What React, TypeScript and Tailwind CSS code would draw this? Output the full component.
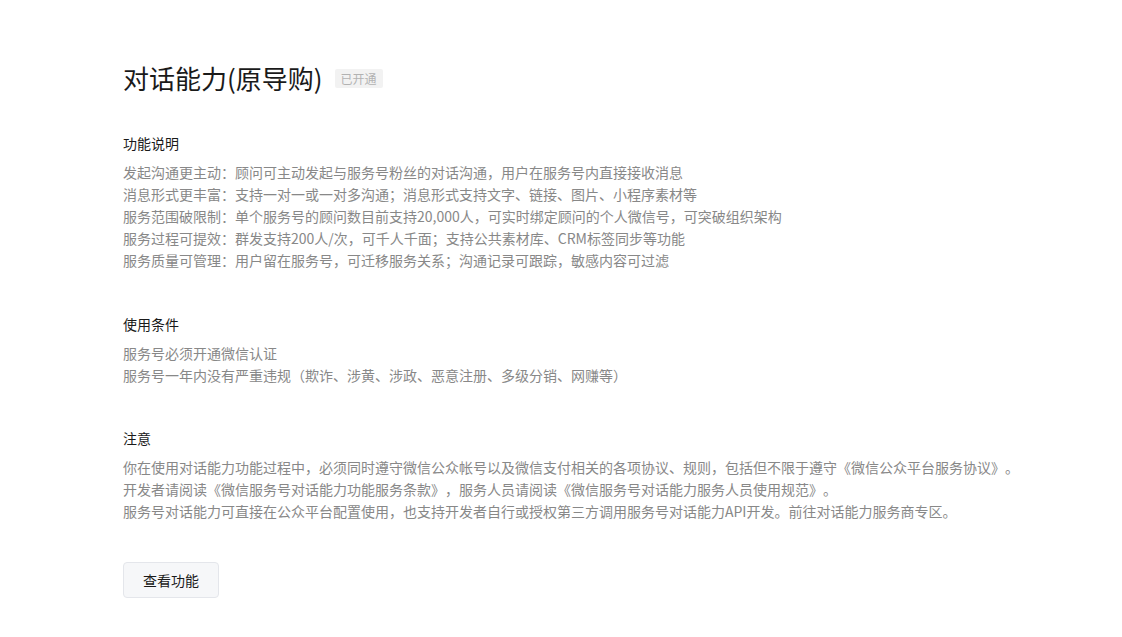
const features = [
  '发起沟通更主动：顾问可主动发起与服务号粉丝的对话沟通，用户在服务号内直接接收消息',
  '消息形式更丰富：支持一对一或一对多沟通；消息形式支持文字、链接、图片、小程序素材等',
  '服务范围破限制：单个服务号的顾问数目前支持20,000人，可实时绑定顾问的个人微信号，可突破组织架构',
  '服务过程可提效：群发支持200人/次，可千人千面；支持公共素材库、CRM标签同步等功能',
  '服务质量可管理：用户留在服务号，可迁移服务关系；沟通记录可跟踪，敏感内容可过滤',
];

const conditions = [
  '服务号必须开通微信认证',
  '服务号一年内没有严重违规（欺诈、涉黄、涉政、恶意注册、多级分销、网赚等）',
];

export default function App() {
  return (
    <div
      className="min-h-screen bg-white pl-[123px] pt-[60px] text-[14px] leading-[22px] text-[#888] [text-spacing-trim:space-all]"
      style={{ fontFamily: '"Noto Sans CJK SC", "Noto Sans", sans-serif' }}
    >
      {/* Header */}
      <div className="flex items-center h-[36px]">
        <h1 className="text-[26px] leading-[36px] font-normal text-[#1a1a1a]">对话能力(原导购)</h1>
        <span className="ml-[12px] mt-[1px] px-[6px] h-[19px] leading-[19px] rounded-[2px] bg-[#f2f2f2] text-[12px] text-[#b2b2b2]">
          已开通
        </span>
      </div>

      {/* Features */}
      <h2 className="mt-[36px] mb-[7px] text-[#1a1a1a]">功能说明</h2>
      {features.map((t, i) => (
        <p key={i}>{t}</p>
      ))}

      {/* Conditions */}
      <h2 className="mt-[42px] mb-[7px] text-[#1a1a1a]">使用条件</h2>
      {conditions.map((t, i) => (
        <p key={i}>{t}</p>
      ))}

      {/* Notice */}
      <h2 className="mt-[41px] mb-[7px] text-[#1a1a1a]">注意</h2>
      <p>
        你在使用对话能力功能过程中，必须同时遵守微信公众帐号以及微信支付相关的各项协议、规则，包括但不限于遵守
        <a>《微信公众平台服务协议》</a>。
      </p>
      <p>
        开发者请阅读<a>《微信服务号对话能力功能服务条款》</a>，服务人员请阅读
        <a>《微信服务号对话能力服务人员使用规范》</a>。
      </p>
      <p>
        服务号对话能力可直接在公众平台配置使用，也支持开发者自行或授权第三方调用服务号对话能力API开发。前往
        <a>对话能力服务商专区</a>。
      </p>

      <button className="mt-[40px] w-[96px] h-[36px] rounded-[4px] border border-[#e4e6eb] bg-[#f6f7f9] text-[14px] text-[#1a1a1a]">
        查看功能
      </button>
    </div>
  );
}
